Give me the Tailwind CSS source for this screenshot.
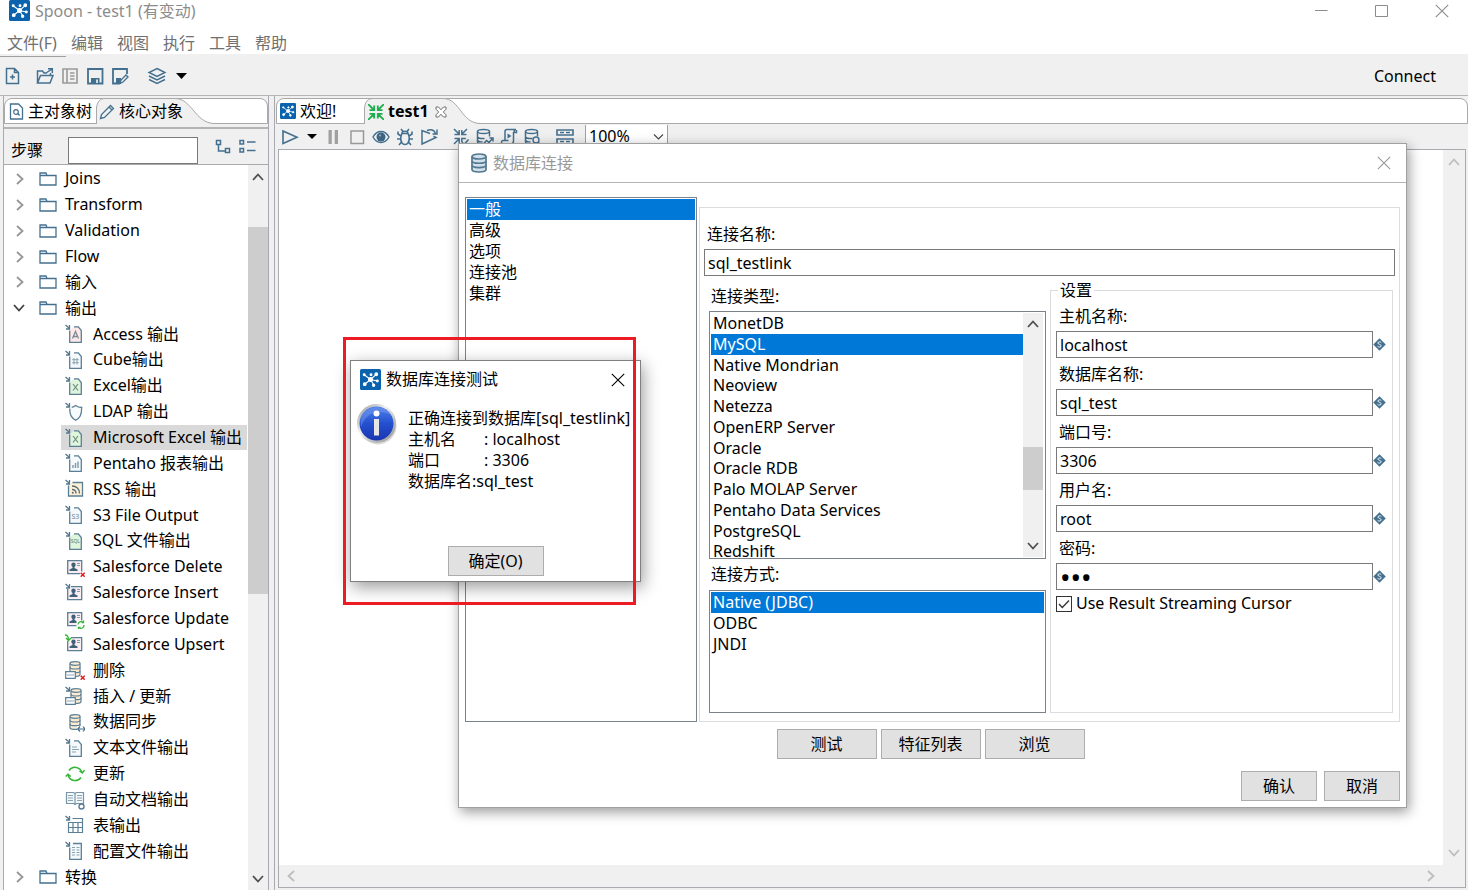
<!DOCTYPE html>
<html lang="zh-CN">
<head>
<meta charset="utf-8">
<meta name="viewport" content="width=device-width, initial-scale=1">
<title>Spoon - test1 (有变动)</title>
<script src="https://cdn.jsdelivr.net/npm/@tailwindcss/browser@4"></script>
</head>
<body class="relative flex h-screen flex-col overflow-hidden bg-[#f0f0f0] font-['Noto_Sans','Noto_Sans_CJK_SC',sans-serif] text-[16px] leading-[21px] text-black">

<!-- Icon sprite -->
<svg class="hidden" aria-hidden="true">
  <defs>
    <symbol id="logo" viewBox="0 0 20 20"><rect width="20" height="20" rx="1.500" fill="#0b62ad"/><g stroke="#fff" stroke-width="1" fill="#fff"><path d="M10 10 4 5.500M10 10l5-4.500M10 10l6.500 1.500M10 10l3 5M10 10l-5.500 4.500"/><circle cx="10" cy="10" r="1.900"/><circle cx="4" cy="5.500" r=".9"/><circle cx="10.500" cy="5.500" r=".9"/><circle cx="15.500" cy="5" r="1.300"/><circle cx="16.500" cy="11.500" r=".9"/><circle cx="13" cy="15.500" r="1.100"/><circle cx="4.500" cy="14.500" r="1.300"/></g></symbol>
    <symbol id="chev-r" viewBox="0 0 10 12"><path d="M2 1l5.500 5L2 11" fill="none" stroke="currentColor" stroke-width="1.800"/></symbol>
    <symbol id="chev-d" viewBox="0 0 12 10"><path d="M1 2l5 5.500L11 2" fill="none" stroke="currentColor" stroke-width="1.800"/></symbol>
    <symbol id="chev-u" viewBox="0 0 12 10"><path d="M1 8l5-5.500L11 8" fill="none" stroke="currentColor" stroke-width="1.800"/></symbol>
    <symbol id="chev-l" viewBox="0 0 10 12"><path d="M8 1 2.500 6 8 11" fill="none" stroke="currentColor" stroke-width="1.800"/></symbol>
    <symbol id="close" viewBox="0 0 14 14"><path d="M.8.8l12.400 12.400M13.200.8.8 13.200" fill="none" stroke="currentColor" stroke-width="1.100"/></symbol>
    <symbol id="folder" viewBox="0 0 18 14"><path d="M1 13V1h6l1 2.500h9V13zM1 3.500h7" fill="none" stroke="#44708f" stroke-width="1.300"/></symbol>
    <symbol id="arrow" viewBox="0 0 20 20"><path d="M.5 1l3.500 3M4.500 1v4H1" fill="none" stroke="#54788f" stroke-width="1.300"/></symbol>
    <symbol id="page" viewBox="0 0 20 20"><path d="M4.700 6.500v11.800h11.600V6l-3-3.500H9L4.700 6.500" stroke="none"/><path d="M4.700 6.500v11.800h11.600V6.500l-3-3.700H9" fill="none" stroke="#5b7f96" stroke-width="1.300"/><use href="#arrow"/></symbol>
    <symbol id="card" viewBox="0 0 20 20"><path d="M2.700 3.700h14v13h-14z" fill="#fbeef2" stroke="#5b7f96" stroke-width="1.300"/><circle cx="8.500" cy="7.700" r="2.200" fill="#3f6178"/><path d="M7.500 9h2v2l3 1.500V14h-8v-1.500l3-1.500z" fill="#3f6178"/><path d="M12 6.500h3M12 8.500h3" stroke="#7f97a6"/></symbol>
    <symbol id="db" viewBox="0 0 12 16"><path d="M1 2.500v11c0 2.600 10 2.600 10 0v-11" fill="#fdebd0" stroke="#5b7f96" stroke-width="1.200"/><ellipse cx="6" cy="2.500" rx="5" ry="1.800" fill="#fdebd0" stroke="#5b7f96" stroke-width="1.200"/><path d="M1 6.200c0 2.400 10 2.400 10 0M1 9.900c0 2.400 10 2.400 10 0" fill="none" stroke="#5b7f96" stroke-width="1.200"/></symbol>
    <symbol id="sync" viewBox="0 0 20 18"><g fill="none" stroke="#35b535" stroke-width="1.500"><path d="M4 5.500A7.300 7.300 0 0 1 17 7.500M16 12.500A7.300 7.300 0 0 1 3 10"/><path d="M14.500 6l2.800 2 2.200-2.800M.7 11.500 3 9.300l2.800 2.200"/></g></symbol>
    <symbol id="var" viewBox="0 0 14 14"><path d="M7 .3 13.700 7 7 13.700.3 7z" fill="#44708f"/><path d="M9 5C8.300 3.700 5.200 3.900 5.300 5.500c.1 1.500 3.500 1.200 3.500 2.900 0 1.600-3 1.800-3.900.5" fill="none" stroke="#fff" stroke-width="1"/></symbol>
    <symbol id="t-db" viewBox="0 0 18 18"><g fill="none" stroke="#44708f" stroke-width="1.500"><ellipse cx="7.500" cy="3.500" rx="6" ry="2"/><path d="M1.500 3.500v10c0 1.500 2.500 2.500 6 2.500M13.500 3.500v5M1.500 8.500c0 1.500 3 2.300 7 2M1.500 12c0 1 2.500 2 5 2"/></g></symbol>
  </defs>
</svg>

<!-- Title bar -->
<header class="bg-white text-[#8c8c8c]">
  <div class="flex h-[26px] items-start pl-[9px]">
    <svg class="h-[21px] w-[21px]"><use href="#logo"/></svg>
    <h1 class="pl-[5px] pt-px">Spoon - test1 (有变动)</h1>
    <div class="ml-auto flex items-center gap-[46px] pr-[19px] pt-1">
      <button aria-label="最小化" class="h-[14px] w-[14px]"><svg class="h-[14px] w-[14px]" viewBox="0 0 14 14"><path d="M0 6.500h12.500" stroke="currentColor"/></svg></button>
      <button aria-label="最大化" class="h-[14px] w-[14px]"><svg class="h-[14px] w-[14px]" viewBox="0 0 14 14"><path d="M.5 1.500h12v11H.5z" fill="none" stroke="currentColor"/></svg></button>
      <button aria-label="关闭" class="h-[14px] w-[14px]"><svg class="h-[14px] w-[14px]"><use href="#close"/></svg></button>
    </div>
  </div>
  <nav class="flex h-7 items-center gap-[14px] pl-[7px] pt-[6px] text-[#707070]">
    <button>文件(F)</button><button>编辑</button><button>视图</button><button>执行</button><button>工具</button><button>帮助</button>
  </nav>
</header>

<!-- Main toolbar -->
<div class="relative flex h-[42px] items-center border-b border-[#b4b4b9] pl-1 pr-8">
  <div class="absolute left-0 top-[2px] h-px w-[66px] bg-[#a0a0a0]"></div>
  <div class="flex items-center pt-[2px]" role="toolbar">
    <button aria-label="新建" class="mr-[14px] h-[18px] w-[18px]"><svg class="h-[18px] w-[18px]" viewBox="0 0 18 18"><path d="M2.500 1.500h8l4 4v11h-12zM10.500 1.500v4h4M8.500 7.500v5M6 10h5" fill="none" stroke="#44708f" stroke-width="1.500"/></svg></button>
    <button aria-label="打开" class="mr-[7px] h-[18px] w-[18px]"><svg class="h-[18px] w-[18px]" viewBox="0 0 18 18"><path d="M1.500 16V4h5l1.500 2h3M1.500 16l3-7.500h12.500L14 16zM14.500 8.500V6M10 6l6-4M12 1.800h4.300V6" fill="none" stroke="#44708f" stroke-width="1.500"/></svg></button>
    <button aria-label="浏览资源库" class="mr-[7px] h-[18px] w-[18px]"><svg class="h-[18px] w-[18px]" viewBox="0 0 18 18"><path d="M2 2h14v14H2zM6 2v14M9 6h4.500M9 9h4.500M9 12h4.500" fill="none" stroke="#999" stroke-width="1.600"/></svg></button>
    <button aria-label="保存" class="mr-[7px] h-[18px] w-[18px]"><svg class="h-[18px] w-[18px]" viewBox="0 0 18 18"><path d="M2 2h14.500v14.500H2z" fill="none" stroke="#44708f" stroke-width="1.800"/><path d="M5 17v-6h8.500v6z" fill="#44708f"/><path d="M11 12.500V16" stroke="#fff" stroke-width="1.500"/></svg></button>
    <button aria-label="另存为" class="mr-[18px] h-[18px] w-[18px]"><svg class="h-[18px] w-[18px]" viewBox="0 0 18 18"><path d="M8 16.500H2V2h14v5" fill="none" stroke="#44708f" stroke-width="1.800"/><path d="M5 17v-6h5v6z" fill="#44708f"/><path d="M9 16.500l1-3.500 5-5 2 2-5 5z" fill="#f0f0f0" stroke="#44708f" stroke-width="1.300"/></svg></button>
    <button aria-label="视图" class="flex items-center gap-[9px]"><svg class="h-[18px] w-[20px]" viewBox="0 0 20 18"><path d="M10 1.500 18 5.500 10 9.500 2 5.500zM2 9l8 4 8-4M2 12.500l8 4 8-4" fill="none" stroke="#44708f" stroke-width="1.400"/></svg><svg class="h-[6px] w-[11px]" viewBox="0 0 11 6"><path d="M0 0h11L5.500 6z"/></svg></button>
  </div>
  <button class="ml-auto pt-[3px]">Connect</button>
</div>

<div class="flex min-h-0 flex-1 gap-[5px] pl-[3px]">
  <!-- Left: object palette -->
  <aside class="flex w-[266px] shrink-0 flex-col border-x border-[#a9a9b0]">
    <div class="mt-[2px] flex h-[26px] shrink-0 rounded-t-lg border border-[#a9a9a9] bg-white" role="tablist">
      <button role="tab" class="flex w-[91px] shrink-0 items-center gap-1 pl-1 whitespace-nowrap"><svg class="h-[17px] w-[15px] shrink-0" viewBox="0 0 15 17"><path d="M1.500 1h8l4 4v11h-12z" fill="none" stroke="#44708f" stroke-width="1.300"/><circle cx="7" cy="9" r="2.300" fill="none" stroke="#44708f" stroke-width="1.200"/><path d="M8.700 10.500l2 2" stroke="#44708f" stroke-width="1.200"/></svg>主对象树</button>
      <button role="tab" aria-selected="true" class="relative -mt-px flex h-[26px] w-[118px] items-center gap-1 pl-[3px] pt-px whitespace-nowrap">
        <svg class="absolute inset-0 h-[26px] w-[118px]" viewBox="0 0 118 26"><path d="M.5 26V10C1 4 4 .5 9 .5h70C96 .5 99 25 118 25.500V26z" fill="#f0f0f0"/><path d="M.5 26V10C1 4 4 .5 9 .5h70C96 .5 99 25 118 25.500" fill="none" stroke="#a9a9a9"/></svg>
        <svg class="relative h-4 w-4" viewBox="0 0 16 16"><path d="M1.500 14.500l1-4L11.500 1.500l3 3-9 9zM10 3l3 3" fill="none" stroke="#44708f" stroke-width="1.300"/></svg><span class="relative">核心对象</span>
      </button>
    </div>
    <div class="h-[5px] shrink-0 border-b-2 border-[#b4b4b4]"></div>
    <div class="flex h-9 shrink-0 items-end border-b border-[#a9a9a9] pl-[7px]">
      <label for="steps" class="pb-[3px]">步骤</label>
      <input id="steps" type="text" class="ml-[25px] h-[27px] w-[130px] border border-[#7a7a7a] bg-white px-1">
      <button aria-label="展开" class="mb-[9px] ml-[17px] h-4 w-4"><svg class="h-4 w-4" viewBox="0 0 16 16"><path d="M1.500 1.500h4v4h-4zM10.500 9.500h4v4h-4zM3.500 6v6h6.500" fill="none" stroke="#44708f" stroke-width="1.500"/></svg></button>
      <button aria-label="折叠" class="mb-[9px] ml-[7px] h-4 w-[18px]"><svg class="h-4 w-[18px]" viewBox="0 0 18 16"><path d="M2 1.500h3.500V5H2zM2 9.500h3.500V13H2zM9 3h8.500M9 11.500h8.500" fill="none" stroke="#44708f" stroke-width="1.500"/></svg></button>
    </div>
    <div class="flex min-h-0 flex-1 bg-white">
      <ul role="tree" class="flex min-w-0 flex-1 flex-col whitespace-nowrap pt-px">
        <li role="treeitem" class="flex h-[26px] items-center pl-[11px]"><svg class="mr-[14px] h-3 w-[10px] text-[#969696]"><use href="#chev-r"/></svg><svg class="mr-2 h-[14px] w-[18px]"><use href="#folder"/></svg>Joins</li>
        <li role="treeitem" class="flex h-[26px] items-center pl-[11px]"><svg class="mr-[14px] h-3 w-[10px] text-[#969696]"><use href="#chev-r"/></svg><svg class="mr-2 h-[14px] w-[18px]"><use href="#folder"/></svg>Transform</li>
        <li role="treeitem" class="flex h-[26px] items-center pl-[11px]"><svg class="mr-[14px] h-3 w-[10px] text-[#969696]"><use href="#chev-r"/></svg><svg class="mr-2 h-[14px] w-[18px]"><use href="#folder"/></svg>Validation</li>
        <li role="treeitem" class="flex h-[26px] items-center pl-[11px]"><svg class="mr-[14px] h-3 w-[10px] text-[#969696]"><use href="#chev-r"/></svg><svg class="mr-2 h-[14px] w-[18px]"><use href="#folder"/></svg>Flow</li>
        <li role="treeitem" class="flex h-[26px] items-center pl-[11px]"><svg class="mr-[14px] h-3 w-[10px] text-[#969696]"><use href="#chev-r"/></svg><svg class="mr-2 h-[14px] w-[18px]"><use href="#folder"/></svg>输入</li>
        <li role="treeitem" aria-expanded="true" class="flex h-[26px] items-center pl-[9px]"><svg class="mr-[14px] h-[10px] w-3 text-[#404040]"><use href="#chev-d"/></svg><svg class="mr-2 h-[14px] w-[18px]"><use href="#folder"/></svg>输出</li>
        <li role="treeitem" class="ml-[57px] flex h-[26px] items-center gap-2 pl-1"><svg class="h-5 w-5" viewBox="0 0 20 20"><use href="#page" fill="#fde8ea"/><path d="M7.500 14.500l3-7 3 7M8.500 12.500h4" fill="none" stroke="#7d8b96" stroke-width="1.300"/></svg>Access 输出</li>
        <li role="treeitem" class="ml-[57px] flex h-[26px] items-center gap-2 pl-1"><svg class="h-5 w-5" viewBox="0 0 20 20"><use href="#page" fill="#f4f9fc"/><path d="M9 8v6.500M12 8v6.500M7.200 9.700h6.600M7.200 12.700h6.600" stroke="#8ba2b0"/></svg>Cube输出</li>
        <li role="treeitem" class="ml-[57px] flex h-[26px] items-center gap-2 pl-1"><svg class="h-5 w-5" viewBox="0 0 20 20"><use href="#page" fill="#dff5dc"/><path d="M8 8l5 6.500M13 8l-5 6.500" stroke="#6d8c80" stroke-width="1.200"/></svg>Excel输出</li>
        <li role="treeitem" class="ml-[57px] flex h-[26px] items-center gap-2 pl-1"><svg class="h-5 w-5" viewBox="0 0 20 20"><path d="M4.700 6.500c0 7 2 9.500 6 11.800 4-2.300 6-4.800 6-12.800-3 0-4.500-.7-6-2-1 .8-2 1.500-4 1.800" fill="#f7fbfd" stroke="#5b7f96" stroke-width="1.300"/><use href="#arrow"/></svg>LDAP 输出</li>
        <li role="treeitem" aria-selected="true" class="ml-[57px] mr-px flex h-[26px] items-center gap-2 bg-[#d9d9d9] pl-1"><svg class="h-5 w-5 shrink-0" viewBox="0 0 20 20"><use href="#page" fill="#dff5dc"/><path d="M8 8l5 6.500M13 8l-5 6.500" stroke="#6d8c80" stroke-width="1.200"/></svg>Microsoft Excel 输出</li>
        <li role="treeitem" class="ml-[57px] flex h-[26px] items-center gap-2 pl-1"><svg class="h-5 w-5" viewBox="0 0 20 20"><use href="#page" fill="#f4f9fc"/><path d="M8 15v-3M10.500 15v-5M13 15V8.500" stroke="#7f97a6" stroke-width="1.400"/></svg>Pentaho 报表输出</li>
        <li role="treeitem" class="ml-[57px] flex h-[26px] items-center gap-2 pl-1"><svg class="h-5 w-5" viewBox="0 0 20 20"><path d="M3.500 6.500V17h14V3.500H7.500" fill="#fdf0d5" stroke="#5b7f96" stroke-width="1.300"/><path d="M7 7c4.500 0 7.500 3 7.500 7.500M7 10.500c2.500 0 4 1.500 4 4" fill="none" stroke="#5b6d7a" stroke-width="1.400"/><circle cx="7.800" cy="13.700" r="1" fill="#5b6d7a"/><use href="#arrow"/></svg>RSS 输出</li>
        <li role="treeitem" class="ml-[57px] flex h-[26px] items-center gap-2 pl-1"><svg class="h-5 w-5" viewBox="0 0 20 20"><use href="#page" fill="#f4f9fc"/><text x="6.500" y="13.500" font-size="7" fill="#6d8494">S3</text></svg>S3 File Output</li>
        <li role="treeitem" class="ml-[57px] flex h-[26px] items-center gap-2 pl-1"><svg class="h-5 w-5" viewBox="0 0 20 20"><use href="#page" fill="#dff5dc"/><text x="5.700" y="12" font-size="5" fill="#55796c">SQL</text></svg>SQL 文件输出</li>
        <li role="treeitem" class="ml-[57px] flex h-[26px] items-center gap-2 pl-1"><svg class="h-5 w-5" viewBox="0 0 20 20"><use href="#card"/><path d="M15 14.500h5V20h-5z" fill="#fff"/><path d="M15.700 15.700l4 4M19.700 15.700l-4 4" stroke="#e02020" stroke-width="1.500"/></svg>Salesforce Delete</li>
        <li role="treeitem" class="ml-[57px] flex h-[26px] items-center gap-2 pl-1"><svg class="h-5 w-5" viewBox="0 0 20 20"><use href="#card"/><path d="M0 0h6v6H0z" fill="#fff"/><use href="#arrow"/></svg>Salesforce Insert</li>
        <li role="treeitem" class="ml-[57px] flex h-[26px] items-center gap-2 pl-1"><svg class="h-5 w-5" viewBox="0 0 20 20"><use href="#card"/><path d="M11.500 11.500H20V20h-8.500z" fill="#fff"/><path d="M13 15.500a3 3 0 0 1 5-2M19 16a3 3 0 0 1-5 2.500M16.500 13.700h2v-2.200M15.500 18.300h-2V20" fill="none" stroke="#35b535" stroke-width="1.300"/></svg>Salesforce Update</li>
        <li role="treeitem" class="ml-[57px] flex h-[26px] items-center gap-2 pl-1"><svg class="h-5 w-5" viewBox="0 0 20 20"><use href="#card"/><path d="M0 0h6v7H0z" fill="#fff"/><path d="M0 1c2 0 3.500 1 3.500 5M1 4l2.500 2.500L6 4" fill="none" stroke="#35b535" stroke-width="1.300"/></svg>Salesforce Upsert</li>
        <li role="treeitem" class="ml-[57px] flex h-[26px] items-center gap-2 pl-1"><svg class="h-5 w-5" viewBox="0 0 20 20"><use href="#db" x="4" y="1" width="12" height="16"/><path d="M.7 11.700h9.600v6.600H.7z" fill="#fff" stroke="#5b7f96" stroke-width="1.200"/><path d="M2 15h7" stroke="#8ba2b0"/><path d="M15.700 15.700l4 4M19.700 15.700l-4 4" stroke="#e02020" stroke-width="1.500"/></svg>删除</li>
        <li role="treeitem" class="ml-[57px] flex h-[26px] items-center gap-2 pl-1"><svg class="h-5 w-5" viewBox="0 0 20 20"><use href="#db" x="5" y="2" width="12" height="16"/><path d="M.7 11.700h9.600v6.600H.7z" fill="#fff" stroke="#5b7f96" stroke-width="1.200"/><path d="M2 15h7" stroke="#8ba2b0"/><use href="#arrow"/></svg>插入 / 更新</li>
        <li role="treeitem" class="ml-[57px] flex h-[26px] items-center gap-2 pl-1"><svg class="h-5 w-5" viewBox="0 0 20 20"><use href="#db" x="4" y="2" width="12" height="16"/><path d="M12 14h8v6h-8z" fill="#fff"/><path d="M13 17h7M15 14.500 12.700 17l2.300 2.500M18 14.500l2 2.500-2 2.500" fill="none" stroke="#44708f" stroke-width="1.200"/></svg>数据同步</li>
        <li role="treeitem" class="ml-[57px] flex h-[26px] items-center gap-2 pl-1"><svg class="h-5 w-5" viewBox="0 0 20 20"><use href="#page" fill="#f4f9fc"/><path d="M7 9h5M7 11.500h7M7 14h4" stroke="#8ba2b0"/></svg>文本文件输出</li>
        <li role="treeitem" class="ml-[57px] flex h-[26px] items-center gap-2 pl-1"><svg class="h-[18px] w-5"><use href="#sync"/></svg>更新</li>
        <li role="treeitem" class="ml-[57px] flex h-[26px] items-center gap-2 pl-1"><svg class="h-5 w-5" viewBox="0 0 20 20"><path d="M1.500 2.500h7l1.500 1 1.500-1h7v11h-7l-1.500 1-1.500-1h-7zM10 3.500v10.500" fill="#f4f9fc" stroke="#7894a6" stroke-width="1.200"/><path d="M3 5.500h5M3 8h5M3 10.500h5M12 5.500h5M12 8h5M12 10.500h5" stroke="#8ba2b0"/><circle cx="16.500" cy="16.500" r="2.500" fill="#fff" stroke="#5b7f96" stroke-width="1.400"/></svg>自动文档输出</li>
        <li role="treeitem" class="ml-[57px] flex h-[26px] items-center gap-2 pl-1"><svg class="h-5 w-5" viewBox="0 0 20 20"><path d="M3.500 7v10.500h14v-14h-10M3.500 7.500h14M3.500 12.500h14M8 7.500v10M13 7.500v10" fill="none" stroke="#5b7f96" stroke-width="1.200"/><use href="#arrow"/></svg>表输出</li>
        <li role="treeitem" class="ml-[57px] flex h-[26px] items-center gap-2 pl-1"><svg class="h-5 w-5" viewBox="0 0 20 20"><path d="M4.700 6.500v11.800h11.600V2.500H8" fill="#f4f9fc" stroke="#5b7f96" stroke-width="1.300"/><path d="M7 6.500h3M7 9h3M7 11.500h3M7 14h3M11.500 6.500h3M11.500 9h3M11.500 11.500h3M11.500 14h3" stroke="#8ba2b0"/><use href="#arrow"/></svg>配置文件输出</li>
        <li role="treeitem" class="flex h-[26px] items-center pl-[11px]"><svg class="mr-[14px] h-3 w-[10px] text-[#969696]"><use href="#chev-r"/></svg><svg class="mr-2 h-[14px] w-[18px]"><use href="#folder"/></svg>转换</li>
      </ul>
      <div class="flex w-5 shrink-0 flex-col items-center bg-[#f0f0f0] pb-[6px] pt-[7px] text-[#505050]">
        <svg class="h-[10px] w-3 shrink-0"><use href="#chev-u"/></svg>
        <div class="mt-[45px] h-[367px] w-full bg-[#cdcdcd]"></div>
        <svg class="mt-auto h-[10px] w-3 shrink-0"><use href="#chev-d"/></svg>
      </div>
    </div>
  </aside>

  <!-- Right: editor -->
  <main class="flex min-w-0 flex-1 flex-col border-l border-[#a9a9b0] pl-px">
    <div class="mt-[2px] flex h-[26px] shrink-0 rounded-t-lg border border-[#a9a9a9] bg-white" role="tablist">
      <button role="tab" class="flex w-[87px] items-center gap-1 pl-[3px] whitespace-nowrap"><svg class="h-4 w-4"><use href="#logo"/></svg>欢迎!</button>
      <button role="tab" aria-selected="true" class="relative -mt-px flex h-[26px] w-[116px] items-center gap-1 pl-[4px] pt-px font-bold">
        <svg class="absolute inset-0 h-[26px] w-[116px]" viewBox="0 0 116 26"><path d="M.5 26V10C1 4 4 .5 9 .5h70C96 .5 97 25 116 25.500V26z" fill="#f0f0f0"/><path d="M.5 26V10C1 4 4 .5 9 .5h70C96 .5 97 25 116 25.500" fill="none" stroke="#a9a9a9"/></svg>
        <svg class="relative h-4 w-4" viewBox="0 0 16 16"><path d="M0 0l6 6M6.200 1.500v4.700H1.500M16 0l-6 6M9.800 1.500v4.700h4.700M0 16l6-6M6.200 14.500V9.800H1.500M16 16l-6-6M9.800 14.500V9.800h4.700" fill="none" stroke="#1fae4f" stroke-width="1.800"/></svg><span class="relative">test1</span>
        <svg class="relative ml-[2px] h-3 w-3" viewBox="0 0 12 12"><path d="M1 1h2.500L6 3.800 8.500 1H11v2.200L8.300 6 11 8.800V11H8.500L6 8.200 3.500 11H1V8.800L3.700 6 1 3.200z" fill="#fff" stroke="#707070"/></svg>
      </button>
    </div>
    <div class="flex h-[25px] shrink-0 items-center pl-[5px]" role="toolbar">
      <button aria-label="运行" class="mr-[8px] h-[18px] w-[18px]"><svg class="h-[18px] w-[18px]" viewBox="0 0 18 18"><path d="M2 3l14 6.300L2 15.500z" fill="none" stroke="#44708f" stroke-width="1.600"/></svg></button>
      <button aria-label="运行选项" class="mr-[10px] w-[10px]"><svg class="h-[5px] w-[10px]" viewBox="0 0 10 5"><path d="M0 0h10L5 5z"/></svg></button>
      <button aria-label="暂停" class="mr-[10px] w-3"><svg class="h-4 w-3" viewBox="0 0 12 16"><path d="M1.500 1h3.300v14H1.500zM7.700 1H11v14H7.700z" fill="#a0a0a0"/></svg></button>
      <button aria-label="停止" class="mr-[7px] w-4"><svg class="h-4 w-4" viewBox="0 0 16 16"><path d="M2 2h12.500v12.500H2z" fill="none" stroke="#999" stroke-width="1.500"/></svg></button>
      <button aria-label="预览" class="mr-[6px] w-[18px]"><svg class="h-[18px] w-[18px]" viewBox="0 0 18 18"><path d="M1 9c4-7.300 12-7.300 16 0-4 7.300-12 7.300-16 0z" fill="none" stroke="#44708f" stroke-width="1.400"/><circle cx="9" cy="9" r="4.500" fill="#3d6480"/><circle cx="8" cy="7.500" r="1" fill="#9db5c4"/></svg></button>
      <button aria-label="调试" class="mr-[6px] w-[18px]"><svg class="h-[18px] w-[18px]" viewBox="0 0 18 18"><path d="M6 5.500h6c1.500 3 1.500 7 0 9.500-1.500 2-4.500 2-6 0-1.500-2.500-1.500-6.500 0-9.500zM6 5.500c0-3 6-3 6 0M5 1l2 2.500M13 1l-2 2.500M5 8 2 6V3.500M13 8l3-2V3.500M5 11H1M13 11h4M5.500 14 3 17M12.500 14l2.500 3" fill="none" stroke="#44708f" stroke-width="1.600"/></svg></button>
      <button aria-label="重放" class="mr-[14px] w-[18px]"><svg class="h-[18px] w-[18px]" viewBox="0 0 18 18"><path d="M10 5.500 2 2.500v13.500L16 9.500l-2.500-1.200M7 2.500c4-1.500 7-1 8.500 3M17 1.500v4.500h-4.500" fill="none" stroke="#44708f" stroke-width="1.500"/></svg></button>
      <button aria-label="校验" class="mr-[6px] w-[18px]"><svg class="h-[18px] w-[18px]" viewBox="0 0 18 18"><path d="M2 1l5 5M7.200 2v4.500H2.500M15 1l-5 5M9.800 2v4.500h4.700M2 16l5-5M7.200 15v-4.500H2.500M9.800 14v-3.500h4M10 14l2 2.500 4.500-5" fill="none" stroke="#44708f" stroke-width="1.500"/></svg></button>
      <button aria-label="影响分析" class="mr-[6px] w-[18px]"><svg class="h-[18px] w-[18px]" viewBox="0 0 18 18"><use href="#t-db"/><path d="M7 16.500l3.500-4 2.500 2 4-4.500M13.500 10H17v3.500" fill="none" stroke="#44708f" stroke-width="1.500"/></svg></button>
      <button aria-label="SQL" class="mr-[6px] w-[18px]"><svg class="h-[18px] w-[18px]" viewBox="0 0 18 18"><path d="M5 12V3.500C5 2 6 1.500 7 1.500h9c-2 0-2 1.500-2 3H16.500V2M13.500 4v9c0 2-1 3-3 3H3c-2 0-2-3.500 0-3.500h5.500" fill="none" stroke="#44708f" stroke-width="1.500"/><path d="M7.500 5.500l4 2.500-4 2.500z" fill="#44708f"/></svg></button>
      <button aria-label="浏览数据库" class="mr-[14px] w-[18px]"><svg class="h-[18px] w-[18px]" viewBox="0 0 18 18"><use href="#t-db"/><circle cx="12" cy="12" r="3" fill="#f0f0f0" stroke="#44708f" stroke-width="1.400"/><path d="M14.200 14.200l3 3" stroke="#44708f" stroke-width="1.600"/></svg></button>
      <button aria-label="结果面板" class="mr-[11px] w-[18px]"><svg class="h-[18px] w-[18px]" viewBox="0 0 18 18"><path d="M1 2h16v5H1zM1 11h16v5H1zM4 4.500h4M10 4.500h4M4 13.500h4M10 13.500h4" fill="none" stroke="#44708f" stroke-width="1.600"/></svg></button>
      <div class="relative h-[23px] w-[83px]">
        <select aria-label="缩放" class="h-full w-full appearance-none border-x border-[#a0a0a0] bg-white pl-[3px] leading-[21px]"><option>100%</option></select>
        <svg class="pointer-events-none absolute right-1 top-[8px] h-2 w-[11px]" viewBox="0 0 11 8"><path d="M1 1.500l4.500 4.500L10 1.500" fill="none" stroke="#444" stroke-width="1.100"/></svg>
      </div>
    </div>
    <div class="mb-[2px] ml-[2px] mr-[2px] flex min-h-0 flex-1 flex-col border border-[#a9a9b0] bg-[#f0f0f0]">
      <div class="flex min-h-0 flex-1">
        <div class="flex-1 bg-white"></div>
        <div class="flex w-[22px] flex-col items-center justify-between py-[7px] text-[#bdbdbd]">
          <svg class="h-[10px] w-3"><use href="#chev-u"/></svg><svg class="h-[10px] w-3"><use href="#chev-d"/></svg>
        </div>
      </div>
      <div class="flex h-[22px] items-center justify-between pb-px pl-[7px] pr-[29px] text-[#bdbdbd]">
        <svg class="h-3 w-[10px]"><use href="#chev-l"/></svg><svg class="h-3 w-[10px]"><use href="#chev-r"/></svg>
      </div>
    </div>
  </main>
</div>

<!-- Database connection window -->
<section role="dialog" aria-labelledby="conn-title" class="absolute left-[458px] top-[143px] flex w-[949px] flex-col border border-[#a0a0a0] bg-white shadow-[2px_4px_12px_rgba(0,0,0,0.4)]">
  <div class="flex h-[39px] items-center border-b border-[#b4b4b4] pl-3 pr-[15px] text-[#999]">
    <svg class="h-5 w-4" viewBox="0 0 16 20"><g fill="#cfe0ec" stroke="#54788f" stroke-width="1.700"><path d="M1 3.500v13c0 3.300 14 3.300 14 0v-13"/><ellipse cx="8" cy="3.500" rx="7" ry="2.500"/><path d="M1 8c0 3 14 3 14 0M1 12.300c0 3 14 3 14 0" fill="none"/></g></svg>
    <h2 id="conn-title" class="pl-[6px]">数据库连接</h2>
    <button aria-label="关闭" class="ml-auto h-[14px] w-[14px]"><svg class="h-[14px] w-[14px]"><use href="#close"/></svg></button>
  </div>
  <div class="flex gap-[2px] px-[6px] pt-[14px]">
    <ul role="listbox" aria-label="类别" class="w-[232px] shrink-0 border border-[#7c828c] p-px *:px-[2px]">
      <li role="option" aria-selected="true" class="bg-[#0078d7] text-white">一般</li>
      <li role="option">高级</li>
      <li role="option">选项</li>
      <li role="option">连接池</li>
      <li role="option">集群</li>
    </ul>
    <div class="mt-[10px] min-w-0 flex-1 border border-[#dcdcdc] px-1 pb-2 pt-4">
      <label for="cname" class="block pl-[3px]">连接名称:</label>
      <input id="cname" type="text" value="sql_testlink" class="mt-[4px] block h-[27px] w-full border border-[#7a7a7a] px-[3px]">
      <div class="flex gap-1 pl-[5px] pr-[2px]">
        <div class="flex w-[337px] shrink-0 flex-col">
          <h3 class="pl-[2px] pt-[10px]">连接类型:</h3>
          <div class="mt-[4px] flex h-[248px] border border-[#7c828c] p-px">
            <div class="min-w-0 flex-1 overflow-hidden">
              <ul role="listbox" aria-label="连接类型" class="flex h-[249px] flex-col *:h-[21px] *:min-h-0 *:px-[2px]">
                <li role="option">MonetDB</li>
                <li role="option" aria-selected="true" class="bg-[#0078d7] text-white">MySQL</li>
                <li role="option">Native Mondrian</li>
                <li role="option">Neoview</li>
                <li role="option">Netezza</li>
                <li role="option">OpenERP Server</li>
                <li role="option">Oracle</li>
                <li role="option">Oracle RDB</li>
                <li role="option">Palo MOLAP Server</li>
                <li role="option">Pentaho Data Services</li>
                <li role="option">PostgreSQL</li>
                <li role="option">Redshift</li>
              </ul>
            </div>
            <div class="mr-px flex w-5 flex-col items-center bg-[#f0f0f0] py-[6px] text-[#505050]">
              <svg class="h-[10px] w-3"><use href="#chev-u"/></svg>
              <div class="mt-[118px] h-[43px] w-full bg-[#cdcdcd]"></div>
              <svg class="mt-auto h-[10px] w-3"><use href="#chev-d"/></svg>
            </div>
          </div>
          <h3 class="pl-[2px] pt-[5px]">连接方式:</h3>
          <ul role="listbox" aria-label="连接方式" class="mt-[5px] h-[123px] border border-[#7c828c] p-px *:px-[2px]">
            <li role="option" aria-selected="true" class="bg-[#0078d7] text-white">Native (JDBC)</li>
            <li role="option">ODBC</li>
            <li role="option">JNDI</li>
          </ul>
        </div>
        <fieldset class="mt-[4px] min-w-0 flex-1 border border-[#dcdcdc] px-[5px]">
          <legend class="ml-[2px] px-[2px]">设置</legend>
          <div class="flex flex-col *:h-[58px] *:pt-[5px]">
            <div><label for="host" class="block pl-[3px]">主机名称:</label><div class="mt-[4px] flex items-center"><input id="host" type="text" value="localhost" class="h-[27px] min-w-0 flex-1 border border-[#7a7a7a] px-[3px]"><svg class="mr-px h-[13px] w-[13px]"><use href="#var"/></svg></div></div>
            <div><label for="dbname" class="block pl-[3px]">数据库名称:</label><div class="mt-[4px] flex items-center"><input id="dbname" type="text" value="sql_test" class="h-[27px] min-w-0 flex-1 border border-[#7a7a7a] px-[3px]"><svg class="mr-px h-[13px] w-[13px]"><use href="#var"/></svg></div></div>
            <div><label for="port" class="block pl-[3px]">端口号:</label><div class="mt-[4px] flex items-center"><input id="port" type="text" value="3306" class="h-[27px] min-w-0 flex-1 border border-[#7a7a7a] px-[3px]"><svg class="mr-px h-[13px] w-[13px]"><use href="#var"/></svg></div></div>
            <div><label for="user" class="block pl-[3px]">用户名:</label><div class="mt-[4px] flex items-center"><input id="user" type="text" value="root" class="h-[27px] min-w-0 flex-1 border border-[#7a7a7a] px-[3px]"><svg class="mr-px h-[13px] w-[13px]"><use href="#var"/></svg></div></div>
            <div><label for="pass" class="block pl-[3px]">密码:</label><div class="mt-[4px] flex items-center"><input id="pass" type="password" value="abc" class="h-[27px] min-w-0 flex-1 border border-[#7a7a7a] px-[3px] text-[28px]"><svg class="mr-px h-[13px] w-[13px]"><use href="#var"/></svg></div></div>
          </div>
          <div class="relative flex items-center gap-1 pt-[2px]">
            <input id="stream" type="checkbox" checked class="peer h-4 w-4 appearance-none border border-[#333] bg-white">
            <svg class="pointer-events-none absolute left-0 hidden h-4 w-4 peer-checked:block" viewBox="0 0 16 16"><path d="M3 8l3.300 3.500L13 4.500" fill="none" stroke="#333" stroke-width="1.300"/></svg>
            <label for="stream">Use Result Streaming Cursor</label>
          </div>
        </fieldset>
      </div>
    </div>
  </div>
  <div class="flex justify-center gap-[4px] pr-[4px] pt-[7px]">
    <button class="h-[30px] w-[100px] border border-[#adadad] bg-[#e1e1e1]">测试</button>
    <button class="h-[30px] w-[100px] border border-[#adadad] bg-[#e1e1e1]">特征列表</button>
    <button class="h-[30px] w-[100px] border border-[#adadad] bg-[#e1e1e1]">浏览</button>
  </div>
  <div class="flex justify-end gap-[7px] pb-[6px] pr-[6px] pt-3">
    <button class="h-[30px] w-[76px] border border-[#adadad] bg-[#e1e1e1]">确认</button>
    <button class="h-[30px] w-[76px] border border-[#adadad] bg-[#e1e1e1]">取消</button>
  </div>
</section>

<!-- Connection test result window -->
<section role="dialog" aria-labelledby="test-title" class="absolute left-[350px] top-[360px] flex w-[291px] flex-col border border-[#808080] bg-white shadow-[2px_5px_16px_rgba(0,0,0,0.4)]">
  <div class="flex h-[37px] items-center pl-[9px] pr-[15px]">
    <svg class="h-[21px] w-[21px]"><use href="#logo"/></svg>
    <h2 id="test-title" class="pl-[5px]">数据库连接测试</h2>
    <button aria-label="关闭" class="ml-auto h-[14px] w-[14px]"><svg class="h-[14px] w-[14px]"><use href="#close"/></svg></button>
  </div>
  <div class="flex h-[148px] gap-[10px] pl-[5px] pt-[10px]">
    <svg class="mt-[-5px] h-[42px] w-[42px] shrink-0" viewBox="0 0 42 42">
      <defs><linearGradient id="ib" x1="0" y1="0" x2="0" y2="1"><stop offset="0" stop-color="#4f7fe8"/><stop offset=".5" stop-color="#2450cf"/><stop offset="1" stop-color="#1a35b0"/></linearGradient><linearGradient id="ir" x1="0" y1="0" x2="1" y2="1"><stop offset="0" stop-color="#909090"/><stop offset=".4" stop-color="#f0f0f0"/><stop offset="1" stop-color="#8a8a8a"/></linearGradient></defs>
      <ellipse cx="22" cy="23" rx="18.500" ry="18.500" fill="#000" opacity=".15"/><circle cx="20.500" cy="20.500" r="19.500" fill="url(#ir)"/><circle cx="20.500" cy="20.500" r="17" fill="url(#ib)"/><path d="M5 24C10 8 25 6 35 12 30 1 9 1 4.500 16z" fill="#7b9ff2" opacity=".45"/><circle cx="20.500" cy="10.500" r="3" fill="#fff"/><path d="M18 16h5v16.500h-5z" fill="#e6e6e6"/>
    </svg>
    <div class="whitespace-nowrap">
      <p>正确连接到数据库[sql_testlink]</p>
      <p class="flex"><span class="w-[76px]">主机名</span>: localhost</p>
      <p class="flex"><span class="w-[76px]">端口</span>: 3306</p>
      <p>数据库名:sql_test</p>
    </div>
  </div>
  <button class="mb-[5px] h-[30px] w-24 self-center border border-[#adadad] bg-[#e1e1e1]">确定(O)</button>
</section>

<!-- Highlight frame -->
<div class="pointer-events-none absolute left-[343px] top-[337px] h-[268px] w-[293px] border-3 border-[#ed1c24]"></div>
</body>
</html>
